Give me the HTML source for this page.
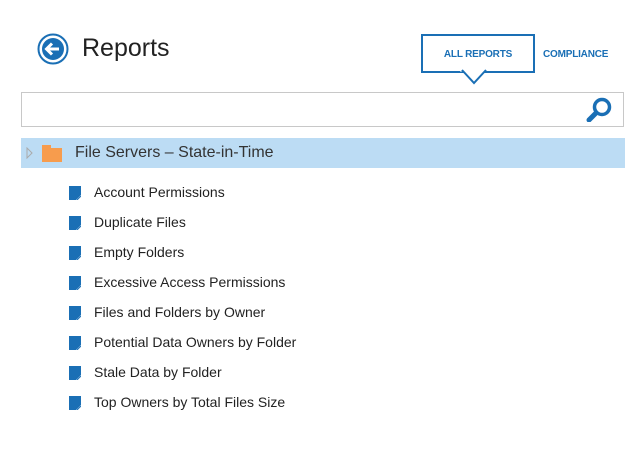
<html><head><style>
body{margin:0;width:640px;height:450px;background:#fff;font-family:"Liberation Sans",sans-serif;position:relative;overflow:hidden}
.a{position:absolute}
.it{position:absolute;left:94px;font-size:14px;color:#222}
.ic{position:absolute;left:69px}
</style></head><body>
<svg class="a" style="left:36px;top:32px" width="34" height="34"><circle cx="17" cy="17" r="14.5" fill="none" stroke="#1a6fb5" stroke-width="2"/><circle cx="17" cy="17" r="11" fill="#1a6fb5"/><path d="M23 17H11M16 11.5L10.5 17L16 22.5" stroke="#fff" stroke-width="3" fill="none"/></svg>
<div class="a" style="left:82px;top:34px;font-size:25px;color:#222">Reports</div>
<div class="a" style="left:421px;top:34px;width:110px;height:35px;border:2px solid #1a6fb5;background:#fff"></div>
<svg class="a" style="left:460px;top:69px" width="32" height="18"><path d="M0 1L15 1 M15 1L26 1" stroke="#fff" stroke-width="3"/><path d="M2 1L14 14L26 1" fill="#fff" stroke="#1a6fb5" stroke-width="2"/></svg>
<div class="a" style="left:421px;top:49px;width:114px;text-align:center;font-size:10px;font-weight:bold;color:#1a6fb5;letter-spacing:-0.2px">ALL REPORTS</div>
<div class="a" style="left:543px;top:49px;font-size:10px;font-weight:bold;color:#1a6fb5;letter-spacing:-0.2px">COMPLIANCE</div>
<div class="a" style="left:21px;top:92px;width:601px;height:33px;border:1px solid #c8c8c8"></div>
<svg class="a" style="left:584px;top:96px" width="30" height="26"><circle cx="18" cy="11" r="7.5" fill="none" stroke="#1a6fb5" stroke-width="3.5"/><path d="M12 17L5 24" stroke="#1a6fb5" stroke-width="5" stroke-linecap="round"/></svg>
<div class="a" style="left:21px;top:138px;width:604px;height:30px;background:#bcdcf4"></div>
<svg class="a" style="left:26px;top:147px" width="8" height="12"><path d="M1 1L6 6L1 11Z" fill="none" stroke="#aaa"/></svg>
<div class="a" style="left:42px;top:145px;width:9px;height:4px;background:#f79c4d"></div>
<div class="a" style="left:42px;top:148px;width:20px;height:14px;background:#f79c4d"></div>
<div class="a" style="left:75px;top:144px;font-size:16px;color:#333">File Servers – State-in-Time</div>
<svg width="0" height="0" style="position:absolute"><defs><symbol id="d" viewBox="0 0 12 14"><path d="M0 0H12V9L7 14H0Z" fill="#1a6fb5"/><path d="M8 14L12 10" stroke="#1a6fb5" stroke-width="1"/></symbol></defs></svg>
<svg class="ic" style="top:186px" width="12" height="14"><use href="#d"/></svg><div class="it" style="top:184px">Account Permissions</div>
<svg class="ic" style="top:216px" width="12" height="14"><use href="#d"/></svg><div class="it" style="top:214px">Duplicate Files</div>
<svg class="ic" style="top:246px" width="12" height="14"><use href="#d"/></svg><div class="it" style="top:244px">Empty Folders</div>
<svg class="ic" style="top:276px" width="12" height="14"><use href="#d"/></svg><div class="it" style="top:274px">Excessive Access Permissions</div>
<svg class="ic" style="top:306px" width="12" height="14"><use href="#d"/></svg><div class="it" style="top:304px">Files and Folders by Owner</div>
<svg class="ic" style="top:336px" width="12" height="14"><use href="#d"/></svg><div class="it" style="top:334px">Potential Data Owners by Folder</div>
<svg class="ic" style="top:366px" width="12" height="14"><use href="#d"/></svg><div class="it" style="top:364px">Stale Data by Folder</div>
<svg class="ic" style="top:396px" width="12" height="14"><use href="#d"/></svg><div class="it" style="top:394px">Top Owners by Total Files Size</div>
</body></html>
